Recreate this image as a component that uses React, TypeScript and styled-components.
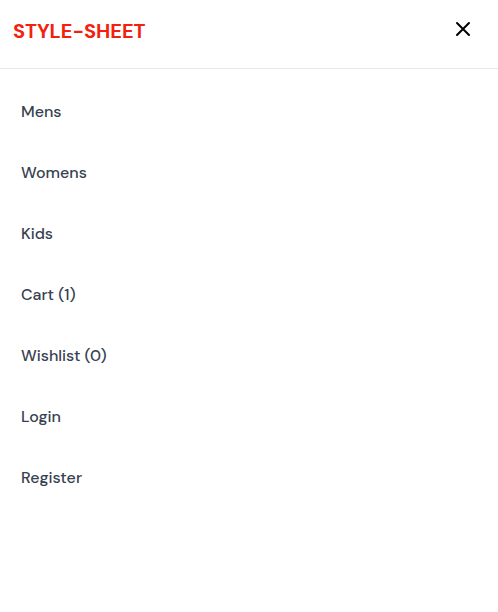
import React from "react";
import styled, { createGlobalStyle } from "styled-components";

const GlobalStyle = createGlobalStyle`
  *, *::before, *::after { box-sizing: border-box; }
  body {
    margin: 0;
    background: #ffffff;
    color: #374151;
    font-family: "DM Sans", "Open Sans", "Noto Sans", sans-serif;
  }
`;

const Header = styled.header`
  display: flex;
  justify-content: space-between;
  align-items: flex-start;
  padding: 16px 23px 22px 13px;
  border-bottom: 1px solid #e5e7eb;
`;

const Brand = styled.a`
  font-size: 20px;
  line-height: 30px;
  font-weight: 700;
  color: #f2200d;
  text-decoration: none;
`;

const CloseButton = styled.button`
  display: flex;
  padding: 1px 0;
  border: 0;
  background: none;
  color: #000000;
  cursor: pointer;
`;

const Menu = styled.ul`
  display: flex;
  flex-direction: column;
  gap: 37px;
  margin: 0;
  padding: 31px 21px;
  list-style: none;
`;

const MenuLink = styled.a`
  display: block;
  font-size: 16px;
  line-height: 24px;
  font-weight: 500;
  color: #374151;
  text-decoration: none;
`;

const items = ["Mens", "Womens", "Kids", "Cart (1)", "Wishlist (0)", "Login", "Register"];

export default function App() {
  return (
    <>
      <GlobalStyle />
      <Header>
        <Brand href="#">STYLE-SHEET</Brand>
        <CloseButton type="button" aria-label="Close menu">
          <svg width="24" height="24" viewBox="0 0 24 24" fill="none" stroke="currentColor" strokeWidth="2" strokeLinecap="round">
            <path d="M6 18 18 6M6 6l12 12" />
          </svg>
        </CloseButton>
      </Header>
      <nav aria-label="Main">
        <Menu>
          {items.map((item) => (
            <li key={item}>
              <MenuLink href="#">{item}</MenuLink>
            </li>
          ))}
        </Menu>
      </nav>
    </>
  );
}
